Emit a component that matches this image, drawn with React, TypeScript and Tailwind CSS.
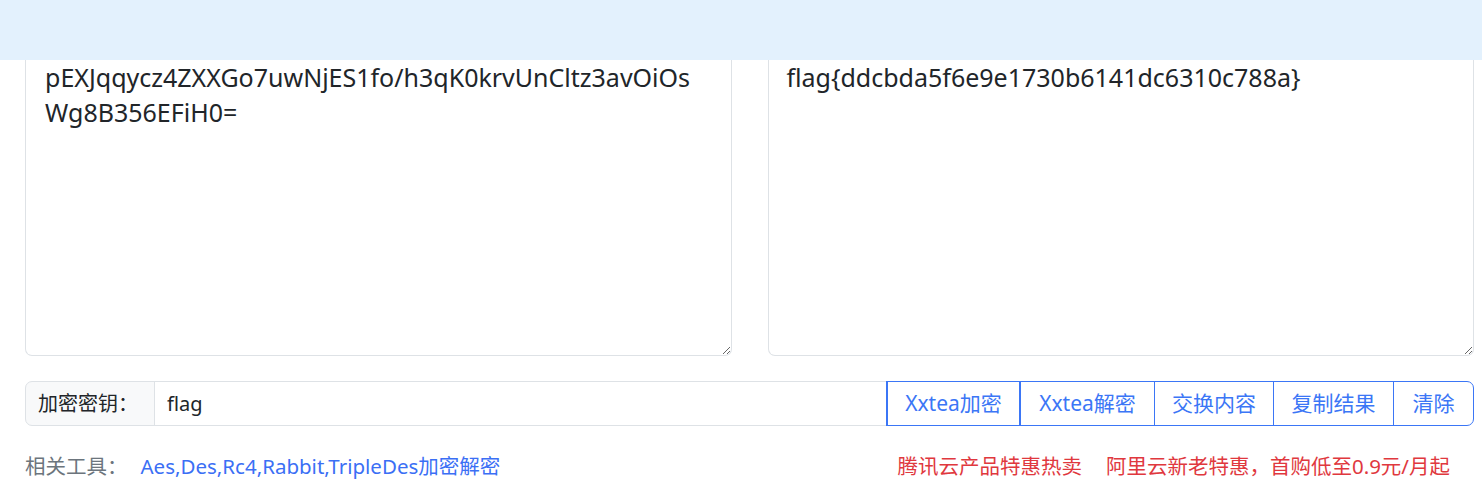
import React from "react";

const FONT = "font-['Noto_Sans','Noto_Sans_CJK_SC',sans-serif]";

export default function App() {
  return (
    <div className={`min-h-screen bg-white text-[#212529] ${FONT}`}>
      <header className="h-[60px] bg-[#e3f1fd]" />
      <main className="pl-[25px] pr-[8px]">
        <div className="grid grid-cols-2 gap-[36px]">
          <textarea
            readOnly
            className="h-[296px] w-full resize-y rounded-b-[7px] border border-t-0 border-[#dee2e6] bg-white px-[19px] pt-0 text-[25px] leading-[35px] text-[#212529] outline-none"
            value={"pEXJqqycz4ZXXGo7uwNjES1fo/h3qK0krvUnCltz3avOiOs\nWg8B356EFiH0="}
          />
          <textarea
            readOnly
            className="h-[296px] w-full resize-y rounded-b-[7px] border border-t-0 border-[#dee2e6] bg-white px-[18px] pt-0 text-[25px] leading-[35px] text-[#212529] outline-none"
            value={"flag{ddcbda5f6e9e1730b6141dc6310c788a}"}
          />
        </div>

        <div className="mt-[25px] flex h-[45px] text-[20px]">
          <span className="flex w-[130px] shrink-0 items-center rounded-l-[7px] border border-[#dee2e6] bg-[#f8f9fa] px-[12px] text-[#212529]">
            加密密钥：
          </span>
          <input
            readOnly
            value="flag"
            className="-ml-px min-w-0 flex-1 border border-[#dee2e6] bg-white px-[12px] text-[20px] text-[#212529] outline-none"
          />
          <button className="-ml-px w-[135px] shrink-0 border-x-2 border-y border-[#3b76f6] text-[21px] text-[#3b76f6]">Xxtea加密</button>
          <button className="-ml-px w-[135px] shrink-0 border border-[#3b76f6] text-[21px] text-[#3b76f6]">Xxtea解密</button>
          <button className="-ml-px w-[120px] shrink-0 border border-[#3b76f6] text-[21px] text-[#3b76f6]">交换内容</button>
          <button className="-ml-px w-[121px] shrink-0 border border-[#3b76f6] text-[21px] text-[#3b76f6]">复制结果</button>
          <button className="-ml-px w-[81px] shrink-0 rounded-r-[7px] border border-[#3b76f6] text-[21px] text-[#3b76f6]">清除</button>
        </div>

        <div className="mt-[25px] flex items-center justify-between text-[20.5px] leading-[30px]">
          <div className="flex items-center">
            <span className="text-[#6c757d]">相关工具：</span>
            <a className="ml-[13px] text-[#3b6ff5]">Aes,Des,Rc4,Rabbit,TripleDes加密解密</a>
          </div>
          <div className="flex items-center gap-[24px] pr-[24px] text-[#e0383e]">
            <a>腾讯云产品特惠热卖</a>
            <a>阿里云新老特惠，首购低至0.9元/月起</a>
          </div>
        </div>
      </main>
    </div>
  );
}
